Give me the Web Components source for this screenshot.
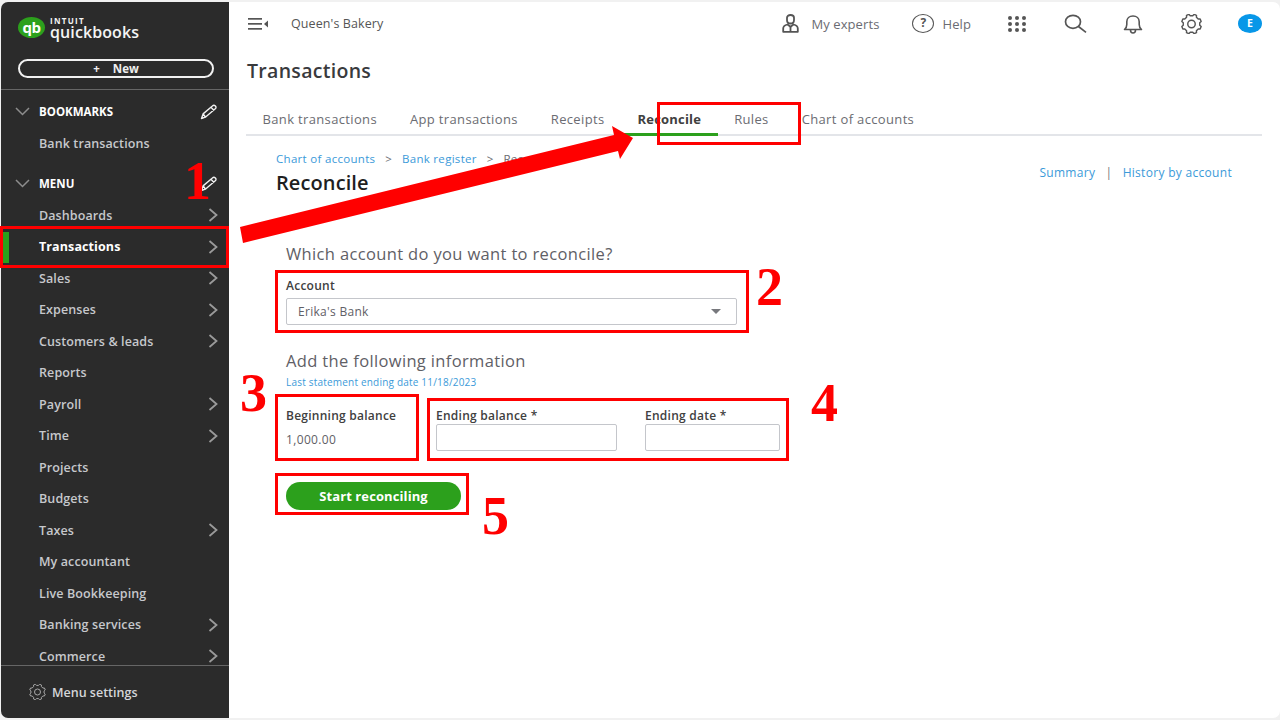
<!DOCTYPE html>
<html>
<head>
<meta charset="utf-8">
<title>Reconcile</title>
<style>
  html, body { margin: 0; height: 100%; background: #f1f1f1; overflow: hidden; font-family: "Open Sans", "Liberation Sans", sans-serif; }
</style>
</head>
<body>
<qb-app></qb-app>

<script>
const ICONS = {
  chevron: `<svg width="10" height="14" viewBox="0 0 10 14" fill="none" stroke="#9a9a9a" stroke-width="1.8"><path d="M1.5 1l7 6-7 6"/></svg>`,
  caret: `<svg width="15" height="9" viewBox="0 0 15 9" fill="none" stroke="#8d8d8d" stroke-width="1.5"><path d="M1 1l6.5 6.5L14 1"/></svg>`,
  pencil: `<svg width="18" height="16" viewBox="0 0 18 16" fill="none" stroke="#f1f1f1" stroke-width="1.4" stroke-linejoin="round"><path d="M1.5 14.5l1.6-4.6L12.4 2c.9-.8 2.1-.8 3 0 .8.8.8 2-.1 2.8l-9.4 8-4.4 1.7zM3.2 10l2.7 3.7M11 3.2l3 3.2"/></svg>`,
  menuToggle: `<svg width="20" height="12" viewBox="0 0 20 12" fill="#555"><rect x="0" y="0" width="14" height="1.7"/><rect x="0" y="5" width="14" height="1.7"/><rect x="0" y="10" width="14" height="1.7"/><path d="M20 2.5v7l-4-3.5z"/></svg>`,
  expert: `<svg width="17" height="19" viewBox="0 0 17 19" fill="none" stroke="#555" stroke-width="1.8" stroke-linejoin="round"><path d="M5 3.8C5 2 6.5 1 8.5 1s3.500 1 3.500 2.800v2.400c0 1.900-1.500 3.300-3.500 3.300S5 8.100 5 6.200z"/><path d="M1.200 17.800v-3.300c0-2.100 2-3.400 4.300-4l3 2.300 3-2.300c2.300.6 4.300 1.900 4.300 4v3.300z"/><path d="M8.500 12.500v5"/></svg>`,
  search: `<svg width="23" height="19" viewBox="0 0 23 19" fill="none" stroke="#555" stroke-width="1.700"><ellipse cx="9" cy="7.800" rx="7.500" ry="6.500"/><path d="M14.500 12.500l7.500 5.800"/></svg>`,
  bell: `<svg width="20" height="20" viewBox="0 0 20 20" fill="none" stroke="#555" stroke-width="1.600" stroke-linejoin="round"><path d="M1.500 15.500c1.500-1.300 2.300-2.600 2.300-5V7.800C3.800 4.200 6.500 2 10 2s6.200 2.200 6.200 5.800v2.700c0 2.400.8 3.700 2.300 5z"/><path d="M7.500 16c0 2 1 3 2.500 3s2.500-1 2.500-3"/></svg>`
};

// gear outline with rounded teeth, used in top bar and sidebar footer
function gear(w, h, color, sw) {
  const pts = [];
  for (let i = 0; i < 8; i++) {
    const a = (i * Math.PI) / 4 + Math.PI / 8;
    [[-0.24, 10], [-0.13, 12], [0.13, 12], [0.24, 10]].forEach(([d, r]) => {
      pts.push((12 + r * Math.cos(a + d)).toFixed(2) + ' ' + (12 + r * Math.sin(a + d)).toFixed(2));
    });
  }
  return `<svg width="${w}" height="${h}" viewBox="0 0 24 24" fill="none" stroke="${color}" stroke-width="${sw}" stroke-linejoin="round"><path d="M${pts.join('L')}z"/><circle cx="12" cy="12" r="4.500"/></svg>`;
}

class QbNavItem extends HTMLElement {
  constructor() {
    super();
    this.attachShadow({ mode: 'open' });
  }
  connectedCallback() {
    const arrow = this.hasAttribute('arrow') ? ICONS.chevron : '';
    this.shadowRoot.innerHTML = `
      <style>
        :host { display: flex; align-items: center; height: 31.5px; padding: 0 11px 0 38px; position: relative; color: #c6c8cc; font-size: 12.500px; font-weight: 600; letter-spacing: .1px; flex: none; }
        :host([active]) { color: #fff; font-weight: 700; }
        :host([active])::before { content: ""; position: absolute; left: 1px; top: 1px; bottom: 0; width: 7px; background: #2ca01c; }
        .t { flex: 1; }
        svg { display: block; }
      </style>
      <span class="t"><slot></slot></span>${arrow}`;
  }
}
customElements.define('qb-nav-item', QbNavItem);

class QbNavHead extends HTMLElement {
  constructor() {
    super();
    this.attachShadow({ mode: 'open' });
  }
  connectedCallback() {
    this.shadowRoot.innerHTML = `
      <style>
        :host { display: flex; align-items: center; height: 31.5px; padding: 0 11px 0 14px; color: #fff; font-size: 11.500px; font-weight: 700; flex: none; }
        .c { width: 24px; display: flex; }
        .t { flex: 1; }
        svg { display: block; }
      </style>
      <span class="c">${ICONS.caret}</span><span class="t"><slot></slot></span>${ICONS.pencil}`;
  }
}
customElements.define('qb-nav-head', QbNavHead);

class QbSidebar extends HTMLElement {
  constructor() {
    super();
    this.attachShadow({ mode: 'open' });
  }
  connectedCallback() {
    const items = [
      ['Dashboards', 1], ['Transactions', 1, 1], ['Sales', 1], ['Expenses', 1], ['Customers &amp; leads', 1],
      ['Reports'], ['Payroll', 1], ['Time', 1], ['Projects'], ['Budgets'], ['Taxes', 1],
      ['My accountant'], ['Live Bookkeeping'], ['Banking services', 1], ['Commerce', 1]
    ];
    const rows = items.map(([t, a, on]) =>
      `<qb-nav-item ${a ? 'arrow' : ''} ${on ? 'active' : ''}>${t}</qb-nav-item>`).join('');
    this.shadowRoot.innerHTML = `
      <style>
        :host { display: flex; flex-direction: column; width: 228px; flex: none; background: #2b2b2b; border-radius: 7px 0 0 7px; overflow: hidden; }
        .top { height: 88px; flex: none; box-sizing: border-box; padding: 13px 17px 0; border-bottom: 1px solid #666; }
        .logo { display: flex; align-items: center; gap: 5px; height: 24px; }
        .mark { width: 27px; height: 21px; border-radius: 50%; background: #2ca01c; color: #fff; font: 700 15px/20px "Open Sans", sans-serif; text-align: center; letter-spacing: -.5px; }
        .word { display: flex; flex-direction: column; color: #f4f4f4; }
        .word b { font: 700 8px/9px "Open Sans", sans-serif; letter-spacing: 1.300px; }
        .word span { font: 600 16px/14px "Open Sans", sans-serif; letter-spacing: .1px; }
        .new { margin-top: 20px; height: 15px; width: 192px; border: 2px solid #f1f1f1; border-radius: 10px; color: #eee; font-size: 11.500px; font-weight: 700; line-height: 15px; display: flex; justify-content: center; gap: 13px; }
        nav { flex: 1; min-height: 0; overflow: hidden; padding-top: 6px; display: flex; flex-direction: column; }
        .gap { height: 9px; flex: none; }
        .foot { height: 53px; flex: none; box-sizing: border-box; border-top: 1px solid #666; display: flex; align-items: center; gap: 6px; padding-left: 28px; color: #d4d6d9; font-size: 12.500px; font-weight: 600; }
        .foot svg { display: block; }
      </style>
      <div class="top">
        <div class="logo">
          <div class="mark">qb</div>
          <div class="word"><b>INTUIT</b><span>quickbooks</span></div>
        </div>
        <div class="new"><span>+</span><span>New</span></div>
      </div>
      <nav>
        <qb-nav-head>BOOKMARKS</qb-nav-head>
        <qb-nav-item>Bank transactions</qb-nav-item>
        <div class="gap"></div>
        <qb-nav-head>MENU</qb-nav-head>
        ${rows}
      </nav>
      <div class="foot">${gear(17, 16, '#a8a8a8', 1.5)}<span>Menu settings</span></div>`;
  }
}
customElements.define('qb-sidebar', QbSidebar);

class QbTopbar extends HTMLElement {
  constructor() {
    super();
    this.attachShadow({ mode: 'open' });
  }
  connectedCallback() {
    let dots = '';
    for (let r = 0; r < 3; r++) for (let c = 0; c < 3; c++) dots += `<circle cx="${2 + c * 7}" cy="${2 + r * 6}" r="2"/>`;
    this.shadowRoot.innerHTML = `
      <style>
        :host { display: flex; align-items: center; height: 43px; flex: none; padding: 0 18px 0 19px; color: #555; font-size: 12.500px; font-weight: 500; }
        svg { display: block; flex: none; }
        .co { margin-left: 23px; flex: 1; letter-spacing: .1px; }
        .lbl { color: #6b6c72; font-size: 13px; letter-spacing: .1px; }
        .help { width: 22px; height: 19px; box-sizing: border-box; border: 1.700px solid #555; border-radius: 50%; font: 700 12px/15px "Open Sans", sans-serif; text-align: center; }
        .avatar { width: 24px; height: 19px; border-radius: 50%; background: #0897e8; color: #fff; font: 700 10.500px/19px "Open Sans", sans-serif; text-align: center; }
      </style>
      ${ICONS.menuToggle}
      <span class="co">Queen's Bakery</span>
      ${ICONS.expert}
      <span class="lbl" style="margin-left:12px">My experts</span>
      <span class="help" style="margin-left:33px">?</span>
      <span class="lbl" style="margin-left:8px">Help</span>
      <svg style="margin-left:37px" width="18" height="16" viewBox="0 0 18 16" fill="#555">${dots}</svg>
      <span style="margin-left:38px;display:flex">${ICONS.search}</span>
      <span style="margin-left:36px;display:flex">${ICONS.bell}</span>
      <span style="margin-left:38px;display:flex">${gear(21, 20, '#555', 1.700)}</span>
      <span class="avatar" style="margin-left:36px">E</span>`;
  }
}
customElements.define('qb-topbar', QbTopbar);

class QbTabs extends HTMLElement {
  constructor() {
    super();
    this.attachShadow({ mode: 'open' });
  }
  connectedCallback() {
    const tabs = ['Bank transactions', 'App transactions', 'Receipts', 'Reconcile', 'Rules', 'Chart of accounts'];
    this.shadowRoot.innerHTML = `
      <style>
        :host { display: flex; height: 33px; box-sizing: border-box; border-bottom: 2px solid #e3e5e9; color: #6b6c72; font-size: 13px; letter-spacing: .35px; flex: none; }
        div { padding: 0 16.500px; height: 33px; box-sizing: border-box; line-height: 32px; flex: none; }
        .on { color: #404040; font-weight: 700; border-bottom: 3px solid #2ca01c; letter-spacing: .2px; }
      </style>
      ${tabs.map(t => `<div class="${t === 'Reconcile' ? 'on' : ''}">${t}</div>`).join('')}`;
  }
}
customElements.define('qb-tabs', QbTabs);

class QbField extends HTMLElement {
  constructor() {
    super();
    this.attachShadow({ mode: 'open' });
  }
  connectedCallback() {
    this.shadowRoot.innerHTML = `
      <style>
        :host { display: block; flex: none; }
        label { display: block; color: #404040; font-size: 12px; font-weight: 600; line-height: 16px; letter-spacing: .25px; white-space: nowrap; }
        .box { box-sizing: border-box; height: 26.500px; border: 1px solid #c4c6cb; border-radius: 2px; background: #fff; }
      </style>
      <label><slot name="label"></slot></label>
      <div class="box"></div>`;
  }
}
customElements.define('qb-field', QbField);

class QbReconcile extends HTMLElement {
  constructor() {
    super();
    this.attachShadow({ mode: 'open' });
  }
  connectedCallback() {
    this.shadowRoot.innerHTML = `
      <style>
        :host { display: block; padding: 14px 30px 0; color: #404040; }
        .head { display: flex; justify-content: space-between; }
        .crumbs { font-size: 11.500px; line-height: 18px; color: #6b6c72; letter-spacing: .3px; white-space: pre; }
        a { color: #3b9ad9; }
        h1 { margin: 2px 0 0; font-size: 20px; line-height: 26px; font-weight: 600; color: #1f1f1f; letter-spacing: .1px; }
        .links { font-size: 12px; letter-spacing: .3px; line-height: 18px; margin-top: 14px; color: #777; white-space: pre; }
        form { display: block; margin: 46px 0 0 10px; }
        h2 { margin: 0; font-size: 16.500px; line-height: 24px; font-weight: 400; color: #5f6066; letter-spacing: .35px; }
        .lbl { font-size: 12px; font-weight: 600; line-height: 16px; letter-spacing: .25px; color: #404040; white-space: nowrap; }
        .select { width: 451px; height: 27px; box-sizing: border-box; margin-top: 4px; border: 1px solid #c4c6cb; border-radius: 2px; padding: 0 15px 0 11px; display: flex; align-items: center; justify-content: space-between; font-size: 12px; letter-spacing: .3px; color: #5f6066; }
        .tri { width: 0; height: 0; border: 5px solid transparent; border-top: 5px solid #77787d; border-bottom: 0; }
        .note { font-size: 10px; line-height: 14px; color: #3b9ad9; margin-top: 2px; letter-spacing: .2px; }
        .row { display: flex; margin-top: 19px; }
        .begin { width: 150px; flex: none; }
        .begin p { margin: 8px 0 0; font-size: 12px; line-height: 16px; color: #5f6066; letter-spacing: .35px; }
        button { display: block; margin-top: 31px; width: 175px; height: 28px; border: 0; border-radius: 14px; background: #2ca01c; color: #fff; font: 700 13px "Open Sans", sans-serif; letter-spacing: .1px; padding: 0; }
      </style>
      <div class="head">
        <div>
          <div class="crumbs"><a>Chart of accounts</a>   &gt;   <a>Bank register</a>   &gt;   Reconcile</div>
          <h1>Reconcile</h1>
        </div>
        <div class="links"><a>Summary</a>   |   <a>History by account</a></div>
      </div>
      <form>
        <h2>Which account do you want to reconcile?</h2>
        <div class="lbl" style="margin-top:12px">Account</div>
        <div class="select"><span>Erika's Bank</span><span class="tri"></span></div>
        <h2 style="margin-top:24px">Add the following information</h2>
        <div class="note">Last statement ending date 11/18/2023</div>
        <div class="row">
          <div class="begin"><div class="lbl">Beginning balance</div><p>1,000.00</p></div>
          <qb-field style="width:181px"><span slot="label">Ending balance *</span></qb-field>
          <qb-field style="width:135px;margin-left:28px"><span slot="label">Ending date *</span></qb-field>
        </div>
        <button type="button">Start reconciling</button>
      </form>`;
  }
}
customElements.define('qb-reconcile', QbReconcile);

// the red tutorial marks drawn over the screenshot: boxes, arrow and step numbers
class QbMarks extends HTMLElement {
  constructor() {
    super();
    this.attachShadow({ mode: 'open' });
  }
  connectedCallback() {
    const boxes = [[0, 226, 229, 268], [657, 102, 801, 145], [275, 270, 749, 333], [275, 394, 419, 461], [427, 398, 789, 461], [275, 473, 469, 515]];
    const nums = [['1', 184, 154], ['2', 756, 260], ['3', 240, 366], ['4', 811, 376], ['5', 482, 489]];
    this.shadowRoot.innerHTML = `
      <style>
        :host { position: absolute; inset: 0; pointer-events: none; display: block; }
        .b { position: absolute; box-sizing: border-box; border: 3.500px solid #f00; }
        .n { position: absolute; font: 700 54px/54px "Liberation Serif", serif; color: #f00; }
        svg { position: absolute; left: 0; top: 0; }
      </style>
      ${boxes.map(([a, b, c, d]) => `<div class="b" style="left:${a}px;top:${b}px;width:${c - a}px;height:${d - b}px"></div>`).join('')}
      <svg width="1280" height="720"><polygon fill="#f00" points="240,227 614,135 612,126 633,138 620,159 618,151 243,243"/></svg>
      ${nums.map(([t, x, y]) => `<div class="n" style="left:${x}px;top:${y}px">${t}</div>`).join('')}`;
  }
}
customElements.define('qb-marks', QbMarks);

class QbApp extends HTMLElement {
  constructor() {
    super();
    this.attachShadow({ mode: 'open' });
  }
  connectedCallback() {
    this.shadowRoot.innerHTML = `
      <style>
        :host { display: flex; position: relative; width: 1280px; height: 720px; box-sizing: border-box; padding: 2px 0 2px 1px; }
        main { flex: 1; min-width: 0; background: #fff; border-radius: 0 7px 7px 0; display: flex; flex-direction: column; }
        .title { margin: 12px 0 0 18px; font-size: 19.500px; line-height: 28px; font-weight: 600; color: #393a3d; letter-spacing: .3px; }
        .wrap { margin: 18px 18px 0 17px; }
      </style>
      <qb-sidebar></qb-sidebar>
      <main>
        <qb-topbar></qb-topbar>
        <div class="title">Transactions</div>
        <div class="wrap">
          <qb-tabs></qb-tabs>
          <qb-reconcile></qb-reconcile>
        </div>
      </main>
      <qb-marks></qb-marks>`;
  }
}
customElements.define('qb-app', QbApp);
</script>
</body>
</html>
